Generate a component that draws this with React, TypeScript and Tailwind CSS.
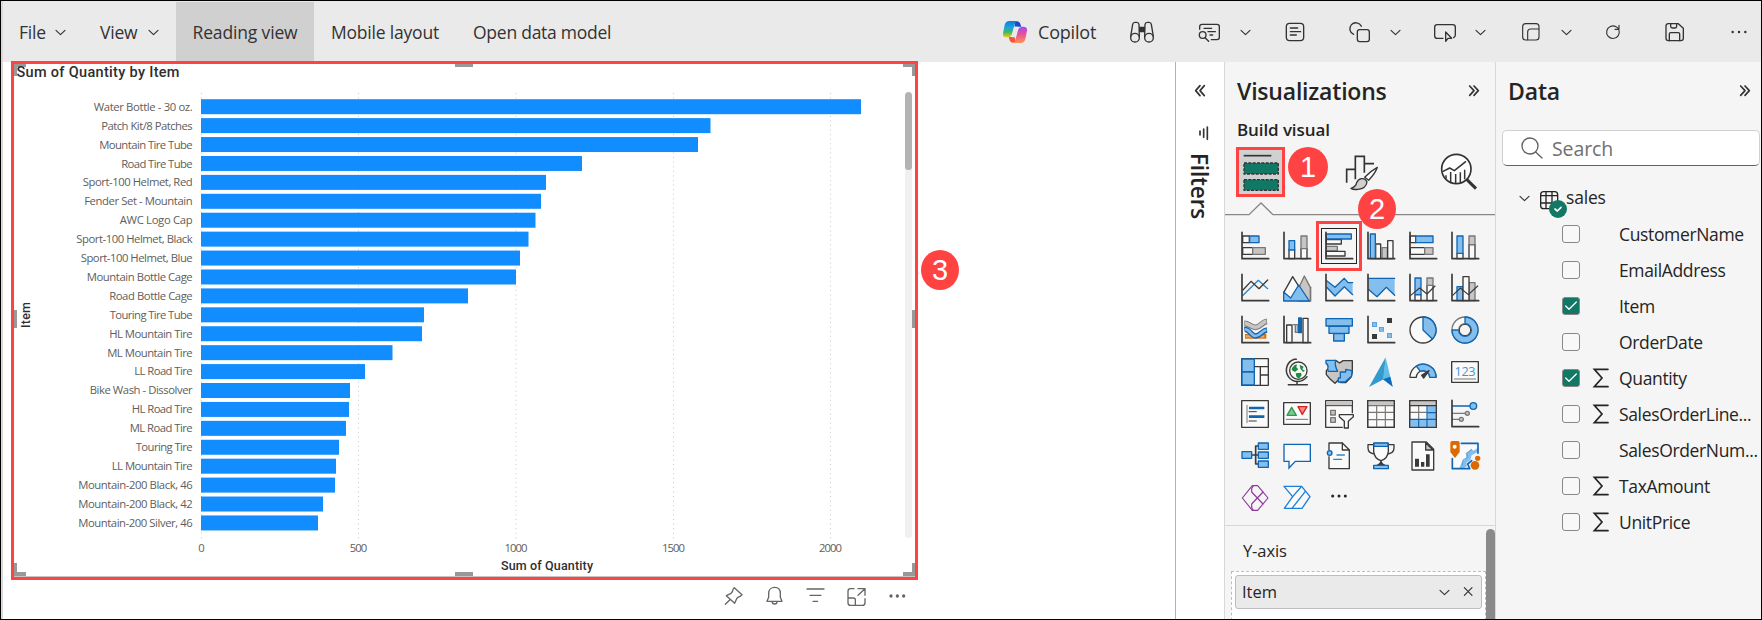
import React from "react";

type Box = [number, number, number, number];

/* Vector drawing on a grid of three units to a pixel. */
function Art({ box, children, className = "" }: { box: Box; children: React.ReactNode; className?: string }) {
  return (
    <svg
      className={"block shrink-0 " + className}
      width={box[2] / 3}
      height={box[3] / 3}
      viewBox={box.join(" ")}
      fill="none"
      stroke="#333"
      strokeWidth={4}
      strokeLinejoin="round"
      strokeLinecap="round"
    >
      {children}
    </svg>
  );
}

const Chevron = ({ className = "" }: { className?: string }) => (
  <Art box={[0, 0, 33, 21]} className={className}>
    <path d="M3 4 16.500 17 30 4" strokeWidth={3.4} />
  </Art>
);

function Toolbar() {
  return (
    <header className="flex h-[61px] shrink-0 items-center bg-[#eaeaea] pt-px text-[17.5px] text-[#333]">
      <span className="ml-[16px] w-[26px] whitespace-nowrap tracking-[-0.2px]">File</span>
      <Chevron className="ml-[10px]" />
      <span className="ml-[34px] w-[39px] whitespace-nowrap tracking-[-0.2px]">View</span>
      <Chevron className="ml-[9px]" />
      <div className="ml-[17px] flex h-full w-[138px] items-center justify-center whitespace-nowrap bg-[#d0d0d0] tracking-[-0.15px]">
        Reading view
      </div>
      <span className="ml-[17px] w-[110px] whitespace-nowrap tracking-[-0.2px]">Mobile layout</span>
      <span className="ml-[32px] w-[140px] whitespace-nowrap tracking-[-0.25px]">Open data model</span>

      <Art box={[69, 60, 75, 72]} className="ml-[390px]">
        <defs>
          <linearGradient id="cpA" x1="0" y1="0" x2="0" y2="1">
            <stop offset="0" stopColor="#0b7fe0" />
            <stop offset=".4" stopColor="#1aa5dc" />
            <stop offset=".68" stopColor="#3fb765" />
            <stop offset="1" stopColor="#f8cc00" />
          </linearGradient>
          <linearGradient id="cpB" x1="0" y1="0" x2="0" y2="1">
            <stop offset="0" stopColor="#9b4ff0" />
            <stop offset=".45" stopColor="#e8509c" />
            <stop offset="1" stopColor="#ff9350" />
          </linearGradient>
        </defs>
        <g stroke="none">
          <path d="M104 64H112Q119 64 121 72L124 80H104Z" fill="#2446c8" />
          <path d="M86 111H104L106 128H98Q91 128 89 121Z" fill="#f2553c" />
          <path d="M88 63H112Q106 65 104 73L95 104Q92 112 84 112H80Q67 112 69 100L74 75Q77 63 88 63Z" fill="url(#cpA)" />
          <path d="M122 129H98Q104 127 106 119L115 88Q118 80 126 80H130Q143 80 141 92L136 117Q133 129 122 129Z" fill="url(#cpB)" />
          <path d="M103 80H114L107 112H96Z" fill="#eaeaea" />
        </g>
      </Art>
      <span className="ml-[10px] w-[60px] whitespace-nowrap text-[18px] tracking-[-0.2px]">Copilot</span>

      <Art box={[447, 60, 78, 72]} className="ml-[31px]">
        <circle cx="465" cy="113" r="13" />
        <circle cx="507" cy="113" r="13" />
        <path d="M452 109 458 73Q459 67 465 67H470Q476 67 477 73L478 110M520 109 514 73Q513 67 507 67H502Q496 67 495 73L494 110" />
        <path d="M479 82H493V95H479Z" fill="#333" />
      </Art>
      <Art box={[654, 60, 72, 72]} className="ml-[43px]">
        <path d="M659 88V80Q659 73 666 73H711Q718 73 718 80V112Q718 119 711 119H694" />
        <circle cx="668" cy="105" r="10" />
        <path d="M675 113 686 124M672 85H695M684 95H706M690 105H698" />
      </Art>
      <Chevron className="ml-[18px]" />
      <Art box={[915, 60, 60, 72]} className="ml-[34px]">
        <rect x="919" y="70" width="52" height="52" rx="10" />
        <path d="M931 84H953M931 95H962M931 105H949" />
      </Art>
      <Art box={[1104, 60, 69, 72]} className="ml-[43px]">
        <path d="M1121 103A18 18 0 1 1 1144 79" />
        <rect x="1132" y="89" width="36" height="36" rx="7" />
      </Art>
      <Chevron className="ml-[19px]" />
      <Art box={[219, 60, 72, 72]} className="ml-[32px]">
        <path d="M249 115H232Q224 115 224 107V82Q224 74 232 74H278Q286 74 286 82V105Q286 110 281 113" />
        <path d="M257 96V124L264 115H275Z" />
      </Art>
      <Chevron className="ml-[18px]" />
      <Art box={[483, 60, 57, 72]} className="ml-[35px]">
        <rect x="488" y="71" width="49" height="49" rx="9" strokeWidth={3.4} />
        <path d="M503 119V96Q503 87 512 87H536" strokeWidth={3.4} />
      </Art>
      <Chevron className="ml-[21px]" />
      <Art box={[735, 60, 48, 72]} className="ml-[33px]">
        <path d="M777 91A19 19 0 1 1 768 80L776 86M777 76V88H765" strokeWidth={3.4} />
      </Art>
      <Art box={[912, 60, 63, 72]} className="ml-[43px]">
        <path d="M918 78Q918 71 925 71H955L970 85V115Q970 122 963 122H925Q918 122 918 115Z" />
        <path d="M932 71V79Q932 84 937 84H945Q950 84 950 79V71M928 122V102Q928 98 932 98H955Q959 98 959 102V122" />
      </Art>
      <Art box={[1113, 60, 51, 72]} className="ml-[46px]">
        <g fill="#333" stroke="none">
          <circle cx="1118" cy="96" r="3.700" />
          <circle cx="1137" cy="96" r="3.700" />
          <circle cx="1156" cy="96" r="3.700" />
        </g>
      </Art>
    </header>
  );
}

/* name, bar end, label width */
const bars: [string, number, number][] = [
  ["Water Bottle - 30 oz.", 861, 99],
  ["Patch Kit/8 Patches", 710.500, 91.500],
  ["Mountain Tire Tube", 698, 93.500],
  ["Road Tire Tube", 582, 71.500],
  ["Sport-100 Helmet, Red", 546, 110],
  ["Fender Set - Mountain", 541, 108.500],
  ["AWC Logo Cap", 535.500, 73],
  ["Sport-100 Helmet, Black", 528.500, 116.500],
  ["Sport-100 Helmet, Blue", 520, 112],
  ["Mountain Bottle Cage", 516, 106],
  ["Road Bottle Cage", 468, 83.500],
  ["Touring Tire Tube", 424, 83],
  ["HL Mountain Tire", 422, 83.500],
  ["ML Mountain Tire", 392.500, 85.500],
  ["LL Road Tire", 365, 58.500],
  ["Bike Wash - Dissolver", 350, 103],
  ["HL Road Tire", 349, 61],
  ["ML Road Tire", 346, 63],
  ["Touring Tire", 339, 57],
  ["LL Mountain Tire", 336, 81],
  ["Mountain-200 Black, 46", 335, 114.500],
  ["Mountain-200 Black, 42", 323, 114.500],
  ["Mountain-200 Silver, 46", 318, 114.500],
];
const ticks: [string, number, number][] = [
  ["0", 201.500, 6],
  ["500", 358.500, 17.500],
  ["1000", 516, 23],
  ["1500", 673.500, 23],
  ["2000", 830.500, 23],
];

function BarChart() {
  return (
    <svg className="block" width="901" height="513" viewBox="14 64 901 513">
      <g fill="#999">
        <path d="M14 64H26V67H17V76H14ZM455 64H473V67H455ZM915 64H903V67H912V76H915Z" />
        <path d="M14 310H17V328H14ZM912 310H915V328H912Z" />
        <path d="M14 563H17V572H26V576H14ZM455 572H473V576H455ZM915 563H912V572H903V576H915Z" />
        <path d="M14 576H915V577H14Z" fill="#c4c4c4" />
      </g>
      {ticks.map(([t, x, w]) => (
        <g key={t}>
          <line x1={x} x2={x} y1="93" y2="539" stroke="#c8c8c8" strokeWidth="1" strokeDasharray="1 3.580" />
          <text x={x} y="552" textAnchor="middle" textLength={w} fontSize="11.300" fill="#605e5c">
            {t}
          </text>
        </g>
      ))}
      {bars.map(([name, end, w], i) => (
        <g key={name}>
          <rect x="201" y={99.200 + i * 18.920} width={end - 201} height="15" fill="#118dff" />
          <text x={192.700 - w} y={110.800 + i * 18.900} textLength={w} fontSize="11.300" fill="#605e5c">
            {name}
          </text>
        </g>
      ))}
      <g className="font-['Roboto']" fontWeight="500" fill="#2f2e2d">
        <text x="16.500" y="77" fontSize="14.500" textLength="163">
          Sum of Quantity by Item
        </text>
        <text x="501" y="570" fontSize="12.500" textLength="92">
          Sum of Quantity
        </text>
        <text transform="translate(29.500 328) rotate(-90)" fontSize="12.500" textLength="26">
          Item
        </text>
      </g>
      <rect x="905" y="94" width="7" height="444" rx="3.500" fill="#f0f0f0" />
      <rect x="905" y="92" width="7" height="78" rx="3.500" fill="#b3b3b3" />
    </svg>
  );
}

function Badge({ n, className }: { n: number; className: string }) {
  return (
    <div
      className={
        "absolute flex items-center justify-center rounded-[50%] bg-[#ff4343] pt-px font-['Liberation_Sans'] text-[29px] leading-none text-white " +
        className
      }
    >
      {n}
    </div>
  );
}

function ReportCanvas() {
  return (
    <main className="relative w-[1172px] shrink-0 bg-white pl-2">
      <div className="relative -mt-px h-[519px] w-[907px] border-[3px] border-[#ff4343]">
        <BarChart />
      </div>
      <div className="mt-[4px] flex h-[24px] items-center pl-[712px]">
        <Art box={[729, 195, 66, 66]}>
          <g stroke="#666">
            <path d="M736 253 750 239M763 203 786 224 781 229Q774 230 770 236L764 250 739 227 753 220Q758 217 759 208Z" />
          </g>
        </Art>
        <Art box={[852, 195, 63, 66]} className="ml-[19px]">
          <g stroke="#666">
            <path d="M861 244 866 232V220C866 209 874 202 884 202S901 209 901 220V232L906 244ZM876 245Q877 252 884 252T891 245" />
          </g>
        </Art>
        <Art box={[975, 195, 63, 66]} className="ml-[20px]">
          <path d="M981 207H1032M990 226H1023M999 244H1013" stroke="#666" />
        </Art>
        <Art box={[1098, 195, 66, 66]} className="ml-[20px]">
          <g stroke="#666">
            <path d="M1122 206H1112Q1104 206 1104 214V248Q1104 256 1112 256H1147Q1155 256 1155 248V236M1104 234H1120Q1126 234 1126 240V256M1134 206H1155V226M1155 206 1134 226" />
          </g>
        </Art>
        <Art box={[1224, 195, 60, 66]} className="ml-[20px]">
          <g fill="#666" stroke="none">
            <circle cx="1233" cy="228" r="5" />
            <circle cx="1252" cy="228" r="5" />
            <circle cx="1271" cy="228" r="5" />
          </g>
        </Art>
      </div>
      <Badge n={3} className="left-[918px] top-[188px] h-[40px] w-[38px]" />
    </main>
  );
}

function FiltersPane() {
  return (
    <aside className="flex w-[50px] shrink-0 flex-col items-center border-x border-l-[#b3b3b3] border-r-[#d8d8d8] bg-white pt-[22px]">
      <Art box={[0, 0, 36, 42]} className="mr-[1px]">
        <path d="M18 5 5 20 18 35M31 5 18 20 31 35" strokeWidth={5} />
      </Art>
      <Art box={[0, 0, 36, 48]} className="ml-[6px] mt-[28px]">
        <path d="M31 3V40M20 9V34M9 15V27" strokeWidth={5} />
      </Art>
      <div className="mr-[2px] mt-[11px] w-[28px] text-[22.5px] font-semibold leading-[28px] tracking-[-0.15px] text-[#252423] [writing-mode:vertical-rl]">
        Filters
      </div>
    </aside>
  );
}

const K = "#3b3a39";
const B = "#0f66b4";
const BF = "#83beec";
const G = "#797775";
const GF = "#c8c6c4";
const W = "#fafafa";

const R = ({ a, f = W, s = K }: { a: Box; f?: string; s?: string }) => (
  <rect x={a[0]} y={a[1]} width={a[2]} height={a[3]} fill={f} stroke={s} />
);
const Axis = () => <path d="M3 1V80H83" stroke={K} strokeWidth={5} />;

const visuals: React.ReactNode[] = [
  <><R a={[5, 12, 20, 20]} /><R a={[5, 47, 30, 20]} /><R a={[26, 12, 28, 20]} f={BF} s={B} /><R a={[35, 47, 38, 20]} f={GF} s={G} /><Axis /></>,
  <><R a={[18, 52, 17, 28]} /><R a={[54, 49, 18, 31]} /><R a={[18, 26, 17, 28]} f={BF} s={B} /><R a={[54, 12, 18, 38]} f={GF} s={G} /><Axis /></>,
  <><R a={[4, 23, 45, 13]} /><R a={[4, 43, 33, 14]} f={GF} s={G} /><R a={[4, 58, 56, 14]} /><R a={[4, 6, 75, 15]} f={BF} s={B} /><Axis /></>,
  <><R a={[26, 36, 15, 44]} /><R a={[45, 47, 16, 33]} f={GF} s={G} /><R a={[62, 26, 16, 54]} /><R a={[10, 6, 15, 74]} f={BF} s={B} /><Axis /></>,
  <><R a={[4, 12, 16, 20]} /><R a={[4, 47, 43, 20]} /><R a={[20, 12, 52, 20]} f={BF} s={B} /><R a={[47, 47, 25, 20]} f={GF} s={G} /><Axis /></>,
  <><R a={[18, 64, 18, 16]} /><R a={[54, 38, 18, 42]} /><R a={[18, 12, 18, 52]} f={BF} s={B} /><R a={[54, 12, 18, 26]} f={GF} s={G} /><Axis /></>,

  <><path d="M6 64 52 19 80 44" stroke="#2a86c8" /><path d="M6 48 30 22 54 44 80 18" stroke={K} /><Axis /></>,
  <><path d="M46 44 64 6 82 40V81H46Z" fill={GF} stroke={G} /><path d="M2 56 29 8 72 76H2Z" fill={W} stroke={K} /><path d="M2 54 23 72 47 33 79 81H2Z" fill={BF} stroke={B} /><path d="M83 40V81" stroke={G} /></>,
  <><path d="M5 20 30 40 58 13 69 26H83V62L58 38 30 66 5 40Z" fill={BF} stroke="none" /><path d="M5 20 30 40 58 13 69 26H83M5 40 30 66 58 38 83 62" stroke={B} /><Axis /></>,
  <><path d="M4 13H83V64L58 40 30 68 4 46Z" fill={BF} stroke="none" /><path d="M4 13H83M4 46 30 68 58 40 83 64" stroke={B} /><Axis /></>,
  <><R a={[18, 62, 18, 18]} /><R a={[54, 34, 18, 46]} /><R a={[18, 12, 18, 50]} f={BF} s={B} /><R a={[54, 12, 18, 22]} f={GF} s={G} /><path d="M5 64 32 42 54 60 78 36" stroke={K} strokeWidth={3.500} /><Axis /></>,
  <><R a={[54, 26, 18, 54]} f={GF} s={G} /><R a={[18, 38, 18, 42]} f={BF} s={B} /><R a={[36, 8, 18, 72]} /><path d="M5 64 28 42 52 62 80 36" stroke={K} strokeWidth={3.500} /><Axis /></>,

  <><path d="M12 61H76" stroke="#d86c00" strokeWidth={14} strokeLinecap="butt" /><path d="M14 61H74" stroke="#f5a85c" strokeWidth={7} strokeDasharray="22 12" strokeLinecap="butt" /><path d="M10 22C24 22 30 34 44 34S62 18 78 16" stroke={G} strokeWidth={17} strokeLinecap="butt" /><path d="M12 22C24 22 30 34 44 34S62 18 76 16" stroke={GF} strokeWidth={11} strokeLinecap="butt" /><path d="M10 40C26 38 30 60 44 60S62 44 78 42" stroke={B} strokeWidth={16} strokeLinecap="butt" /><path d="M12 40C26 38 30 60 44 60S62 44 76 42" stroke={BF} strokeWidth={8} strokeLinecap="butt" /><Axis /></>,
  <><R a={[11, 27, 16, 53]} /><path d="M31 26H45V49H37V30" fill={GF} stroke={G} /><rect x="47" y="6" width="8" height="44" fill={B} stroke={B} /><R a={[60, 7, 15, 73]} /><Axis /></>,
  <><R a={[3, 8, 79, 22]} f={BF} s={B} /><R a={[12, 31, 60, 21]} f={BF} s={B} /><R a={[26, 53, 32, 22]} f={BF} s={B} /></>,
  <><g stroke="none"><path d="M15 18H30V33H15ZM36 33H51V47H36ZM60 51H75V66H60Z" fill="#5da2da" /><path d="M18 21H27V30H18ZM39 36H48V44H39ZM63 54H72V63H63Z" fill={BF} /><path d="M60 6H75V21H60ZM15 54H30V69H15Z" fill={K} /></g><Axis /></>,
  <><circle cx="42" cy="42" r="39" fill={W} stroke={K} /><path d="M42 3A39 39 0 0 1 70 69L42 42Z" fill={BF} stroke={B} /></>,
  <><circle cx="42" cy="42" r="39" fill={W} stroke={G} /><path d="M42 3A39 39 0 1 1 3 42H23A19 19 0 1 0 42 23Z" fill={BF} stroke={B} /><path d="M23 42A19 19 0 0 1 42 23" stroke={G} /><circle cx="42" cy="42" r="17" fill="#f5f5f5" stroke={K} strokeWidth={3} /></>,

  <><R a={[2, 2, 80, 80]} /><R a={[3, 3, 37, 39]} f={BF} s={B} /><R a={[3, 42, 37, 39]} f={BF} s={B} /><path d="M42 26H82M58 26V82M58 51H82" stroke={K} /></>,
  <><path d="M34 4A34 34 0 1 0 72 56M42 70V80M16 80H73M34 4H40" stroke={K} strokeWidth={4.500} /><circle cx="46" cy="38" r="26" fill={W} stroke={K} /><path d="M27 30Q36 18 42 20L40 28 46 34 36 42 26 36ZM50 20 62 26 58 34 66 38 60 42 52 32ZM38 46 54 44 56 52 48 62 40 56Z" fill="#1e8e3e" stroke="none" /></>,
  <><path d="M32 7 44 15 54 8H82V42L78 58 62 74 48 74 40 66 30 76 16 64 4 50 4 38Z" fill={GF} stroke={K} /><path d="M3 7H32Q28 22 38 40H12Q6 38 9 28 10 20 3 16Z" fill={BF} stroke={B} /><path d="M46 42H62V34L81 38 80 54 60 72 40 72V60H46Z" fill={BF} stroke={B} /></>,
  <><g stroke="none"><path d="M56 -2 50 64 6 87Z" fill="#3499cc" /><path d="M56 -2 77 86 48 64Z" fill="#5fbde8" /><path d="M48 64 70 56 77 86Z" fill="#0f6cbd" /></g></>,
  <><path d="M3 58A39 39 0 0 1 81 58H62A20 20 0 0 0 22 58Z" fill={W} stroke={K} /><path d="M22 24A39 39 0 0 1 81 58H62A20 20 0 0 0 34 40Z" fill={BF} stroke={B} /><path d="M60 38 38 52 44 60Z" fill={K} stroke={K} /></>,
  <><R a={[2, 11, 80, 62]} /><text x="42" y="53" textAnchor="middle" fontSize="38" textLength="63" fill="#3a96d8" stroke="none">123</text><path d="M10 63H74" stroke={G} strokeWidth={3} /></>,

  <><R a={[2, 2, 80, 80]} /><path d="M18 16V68" stroke={G} strokeWidth={3} /><path d="M24 24H70M24 50H70" stroke={B} strokeWidth={8} strokeLinecap="butt" /><path d="M24 35H46M24 63H46" stroke={K} strokeWidth={3} /></>,
  <><R a={[2, 8, 80, 65]} /><path d="M12 46 26 22 40 46Z" fill="#7fc793" stroke="#2a9d48" /><path d="M45 20H72L58 43Z" fill="#f58c8c" stroke="#d62020" /><path d="M10 58H74" stroke={G} strokeWidth={3} /></>,
  <><path d="M82 38V2H2V82H52" fill={W} stroke={K} /><path d="M4 4H80V15H4Z" fill={GF} stroke="none" /><path d="M3 17H81" stroke={K} strokeWidth={3} /><R a={[17, 31, 14, 14]} f={GF} s={G} /><R a={[17, 53, 14, 14]} f={GF} s={G} /><path d="M43 44H85V50L70 64V84H58V64L43 50Z" fill={W} stroke={K} /></>,
  <><R a={[2, 2, 80, 80]} /><path d="M4 4H80V15H4Z" fill={GF} stroke="none" /><path d="M3 17H81M3 37H81M3 59H81M29 18V81M55 18V81" stroke={G} strokeWidth={3.500} /><path d="M2 2H82V82H2Z" stroke={K} /></>,
  <><R a={[2, 2, 80, 80]} /><path d="M4 4H80V15H4Z" fill={GF} stroke="none" /><path d="M55 18H81V81H3V59H55Z" fill={BF} stroke="none" /><path d="M3 37H52M29 18V56" stroke={G} strokeWidth={3.500} /><path d="M3 58H81M54 18V81M54 38H81M29 58V81" stroke={B} strokeWidth={3.500} /><path d="M2 17H82M2 2H82V82H2Z" stroke={K} /></>,
  <><path d="M5 18H56" stroke={B} strokeWidth={5} /><circle cx="67" cy="18" r="10" fill={BF} stroke={B} /><path d="M5 40H42M5 58H25" stroke={G} /><circle cx="49" cy="40" r="6" fill={GF} stroke={G} /><circle cx="31" cy="58" r="6" fill={GF} stroke={G} /><Axis /></>,

  <><path d="M32 39H52M52 12H44V66H52" stroke={K} strokeWidth={5} /><R a={[3, 29, 29, 20]} f={BF} s={B} /><R a={[52, 3, 30, 19]} f={BF} s={B} /><R a={[52, 30, 30, 19]} f={BF} s={B} /><R a={[52, 57, 30, 19]} f={BF} s={B} /></>,
  <path d="M3 7H82V58H37L18 78V58H3Z" fill={W} stroke={B} strokeWidth={4} strokeLinejoin="miter" />,
  <><path d="M12 24V3H52L73 24V80H12V44" fill={W} stroke={K} /><path d="M52 3V24H73" stroke={K} /><circle cx="14" cy="33" r="7" fill={BF} stroke={B} /><path d="M36 39H58M26 52H50" stroke="#2a86c8" /></>,
  <><path d="M20 8H3V18Q3 34 24 36M64 8H81V18Q81 34 60 36" stroke={K} /><path d="M20 4H64V28Q62 50 42 56 22 50 20 28Z" fill={W} stroke={K} /><path d="M42 56Q42 64 30 70H54Q42 64 42 56Z" fill={K} stroke={K} /><R a={[21, 3, 42, 10]} f={BF} s={B} /><R a={[20, 70, 44, 10]} f={BF} s={B} /></>,
  <><path d="M9 0H52L74 22V84H9Z" fill={W} stroke={K} /><path d="M50 2V24H72Z" fill={GF} stroke={K} /><path d="M18 50H30V74H18ZM36 60H46V74H36ZM51 37H62V74H51Z" fill={K} stroke="none" /></>,
  <><path d="M34 4H80V34L60 44 46 60 30 80H4V50L20 44" fill={W} stroke="none" /><path d="M80 18V30L62 40 58 54 46 62 48 72 36 80H24L34 58 46 48 44 34 60 22 68 26Z" fill={BF} stroke="none" /><path d="M31 4H81V34M4 50V80H56L50 66 62 56" stroke={B} strokeWidth={5} /><path d="M62 22 48 34 50 46 36 54 34 70" stroke="#5da2da" strokeWidth={3} /><g fill="#dc6a00" stroke="none"><path d="M-2 2Q-2 -3 4 -3H20Q26 -3 26 2V30L12 48 -2 30Z" /><circle cx="72" cy="70" r="13" /><circle cx="80" cy="49" r="8" /></g><circle cx="11" cy="14" r="6" fill="#fff" stroke="none" /></>,

  <><g stroke="#8f3a9e" strokeWidth={3.500}><path d="M4 42 34 5H50L81 42 50 79H34Z" /><path d="M36 7 32 14V24L66 60M66 24 32 60V70L36 78" /></g></>,
  <><g stroke="#1b7fdb" strokeWidth={4}><path d="M3 7H56L81 38 57 73H4L29 38Z" fill={W} /><path d="M54 9 29 38M67 22 27 73" /></g></>,
  <g stroke="none" fill="#252423"><circle cx="23" cy="36" r="4.500" /><circle cx="42" cy="36" r="4.500" /><circle cx="61" cy="36" r="4.500" /></g>,
];

function VisualizationsPane() {
  return (
    <aside className="relative flex w-[271px] shrink-0 flex-col border-r border-[#d8d8d8] bg-[#f5f5f5] text-[#252423]">
      <div className="flex h-[60px] shrink-0 items-center pb-[2px] pl-[12px]">
        <h2 className="w-[231px] text-[23px] font-semibold tracking-[-0.2px]">Visualizations</h2>
        <Art box={[0, 0, 39, 42]}>
          <path d="M5 6 18 20 5 34M18 6 31 20 18 34" strokeWidth={5} />
        </Art>
      </div>
      <h3 className="h-[25px] pl-[12px] text-[17px] font-semibold leading-[16px] tracking-[-0.1px]">Build visual</h3>
      <div className="flex h-[50px] shrink-0 pl-[11px]">
        <div className="flex h-[50px] w-[49px] items-center justify-center border-[3px] border-[#ff4343] bg-[#d0d0d0]">
          <Art box={[216, 96, 114, 117]}>
            <path d="M221 104H304" strokeWidth={5} strokeLinecap="butt" />
            <g fill="#117865" strokeWidth={4} strokeLinecap="butt" strokeDasharray="9 4">
              <rect x="222" y="126" width="103" height="33" />
              <rect x="222" y="176" width="103" height="32" />
            </g>
          </Art>
        </div>
        <Art box={[522, 99, 105, 117]} className="ml-[59px] mt-[6px]">
          <path d="M530 188V148H556M556 178V109H583V158M583 131H612" strokeWidth={5} strokeLinecap="butt" strokeLinejoin="miter" />
          <path d="M584 172Q603 152 622 142 616 160 596 181Z" fill="#fff" />
          <path d="M574 176Q586 174 591 186 588 206 564 208 550 210 543 205 558 200 560 188 564 178 574 176Z" fill="#d0d0d0" />
        </Art>
        <Art box={[807, 96, 117, 117]} className="ml-[60px] mt-[5px]">
          <circle cx="859" cy="147" r="44" fill="#fff" strokeWidth={5} />
          <path d="M818 155 839 144 853 152 888 124M828 166V176M842 156V188M857 162V191M871 157V188M884 149V178" strokeWidth={4.500} strokeLinecap="butt" />
          <path d="M890 178 918 206" strokeWidth={9} strokeLinecap="butt" />
        </Art>
      </div>
      <svg className="mt-[5px] block shrink-0" width="270" height="16" fill="none" stroke="#8a8886" strokeWidth="1.300">
        <path d="M0 12.700H24L36 1 48 12.700H270" />
      </svg>
      <div className="mt-[14px] grid shrink-0 grid-cols-[repeat(6,42px)] grid-rows-[repeat(7,42px)] pl-[16px]">
        {visuals.map((v, i) => (
          <Art key={i} box={[0, 0, 84, 84]} className="overflow-visible">
            {v}
          </Art>
        ))}
      </div>
      <div className="-mt-[1px] flex min-h-0 flex-1 border-t border-[#d8d8d8]">
        <div className="w-[261px] pl-[6px]">
          <div className="h-[45px] pl-[12px] text-[16.5px] leading-[50px] tracking-[-0.1px]">Y-axis</div>
          <div className="h-[60px] w-[255px] border border-dashed border-[#bdbdbd] bg-white p-[3px]">
            <div className="flex h-[34px] items-center rounded-[3px] border border-[#bdbdbd] bg-[#eaeaea] pl-[6px] text-[16.5px]">
              <span className="w-[197px]">Item</span>
              <Chevron />
              <Art box={[0, 0, 33, 33]} className="ml-[13px] -mt-[2px]">
                <path d="M4 5 27 28M27 5 4 28" strokeWidth={3.500} />
              </Art>
            </div>
          </div>
        </div>
        <div className="mt-[3px] h-[100px] w-[9px] rounded-t-[5px] bg-[#8a8a8a]" />
      </div>
      <div className="absolute left-[91px] top-[159px] h-[50px] w-[46px] border-[3px] border-[#ff4343]" />
      <div className="absolute left-[96px] top-[166px] h-[36px] w-[36px] border border-[#252423]" />
      <Badge n={1} className="left-[63px] top-[85px] h-[40px] w-[40px]" />
      <Badge n={2} className="left-[133px] top-[127px] h-[40px] w-[38px]" />
    </aside>
  );
}

/* label, checked, summed */
const fields: [string, boolean, boolean][] = [
  ["CustomerName", false, false],
  ["EmailAddress", false, false],
  ["Item", true, false],
  ["OrderDate", false, false],
  ["Quantity", true, true],
  ["SalesOrderLine...", false, true],
  ["SalesOrderNum...", false, false],
  ["TaxAmount", false, true],
  ["UnitPrice", false, true],
];

function DataPane() {
  return (
    <aside className="flex w-[265px] shrink-0 flex-col overflow-hidden bg-[#f5f5f5] text-[#252423]">
      <div className="flex h-[60px] shrink-0 items-center pb-[2px] pl-[12px]">
        <h2 className="w-[231px] text-[23px] font-semibold tracking-[-0.15px]">Data</h2>
        <Art box={[0, 0, 39, 42]}>
          <path d="M5 6 18 20 5 34M18 6 31 20 18 34" strokeWidth={5} />
        </Art>
      </div>
      <div className="ml-[6px] mt-[8px] flex h-[36px] w-[258px] shrink-0 items-center rounded-[5px] border border-[#d1d1d1] border-b-[#616161] bg-white">
        <Art box={[90, 48, 72, 72]} className="ml-[17px]">
          <g stroke="#616161">
            <circle cx="120" cy="78" r="24" />
            <path d="M137 96 156 114" />
          </g>
        </Art>
        <span className="ml-[8px] pt-[2px] text-[19.5px] tracking-[-0.1px] text-[#707070]">Search</span>
      </div>
      <div className="mt-[13px] flex h-[37px] shrink-0 items-center pl-[23px]">
        <Chevron className="mt-[1px]" />
        <Art box={[147, 201, 87, 90]} className="ml-[9px] mt-[12px]">
          <rect x="152" y="209" width="51" height="51" rx="9" stroke="#252423" />
          <path d="M153 221H202M153 243H202M168 210V259M186 210V259" stroke="#252423" />
          <circle cx="204" cy="261" r="27" fill="#117865" stroke="none" />
          <path d="M195 261 202 267 213 256" stroke="#fff" strokeWidth={5} />
        </Art>
        <span className="-ml-[2px] text-[17.5px] tracking-[-0.2px]">sales</span>
      </div>
      {fields.map(([label, checked, sum]) => (
        <div key={label} className="flex h-[36px] shrink-0 items-center pl-[66px]">
          <div
            className={
              "flex h-[18px] w-[18px] items-center justify-center rounded-[3px] border border-[#8a8886] " +
              (checked ? "bg-[#117865]" : "bg-[#f8f8f8]")
            }
          >
            {checked && (
              <Art box={[0, 0, 42, 36]}>
                <path d="M5 18 15 28 37 6" stroke="#fff" />
              </Art>
            )}
          </div>
          <div className="ml-[12px] w-[27px]">
            {sum && (
              <Art box={[0, 0, 54, 60]}>
                <path d="M48 4H7L30 30 7 56H48" stroke="#252423" strokeWidth={5} strokeLinejoin="miter" />
              </Art>
            )}
          </div>
          <span className="whitespace-nowrap text-[17.5px] tracking-[-0.35px]">{label}</span>
        </div>
      ))}
    </aside>
  );
}

export default function App() {
  return (
    <div className="flex h-[620px] w-[1762px] overflow-hidden border border-black bg-white font-['Open_Sans','Noto_Sans',sans-serif]">
      <div className="w-[2px] shrink-0 bg-[#dcd8d8]" />
      <div className="flex min-w-0 flex-1 flex-col">
        <Toolbar />
        <div className="flex min-h-0 flex-1">
          <ReportCanvas />
          <FiltersPane />
          <VisualizationsPane />
          <DataPane />
        </div>
      </div>
    </div>
  );
}
